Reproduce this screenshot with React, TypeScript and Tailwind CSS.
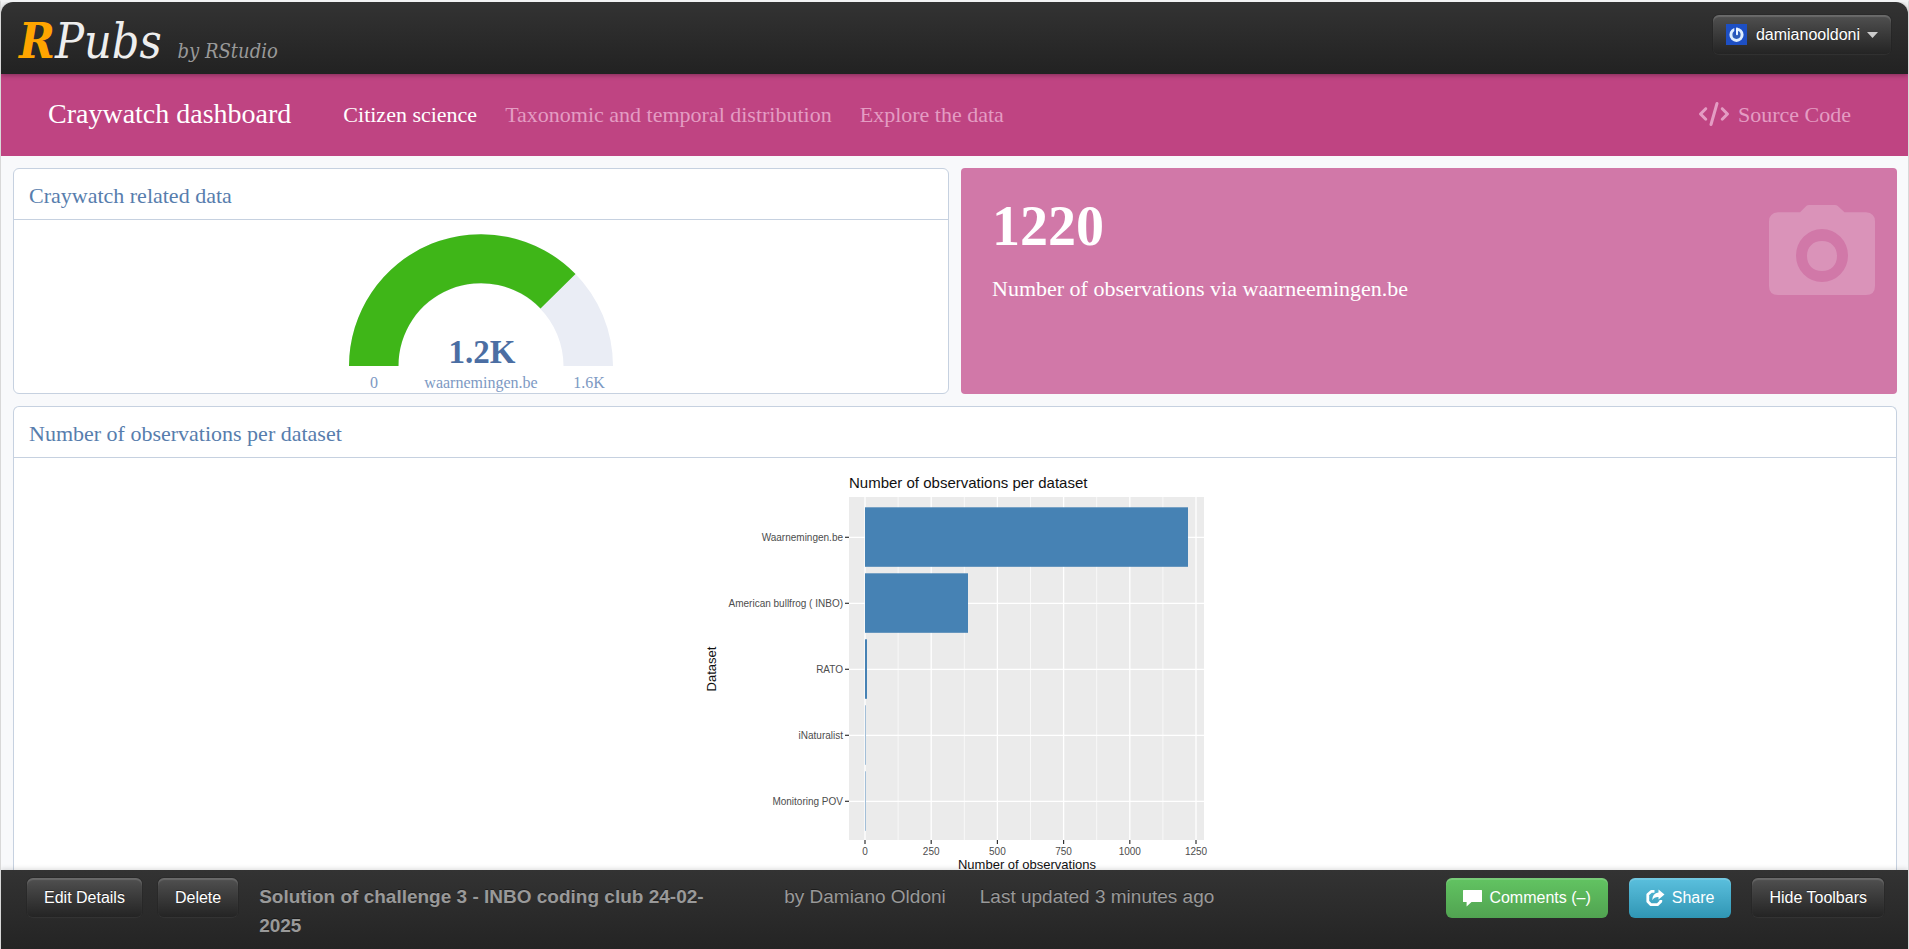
import type { ReactNode } from "react";
import { FaCode } from "react-icons/fa6";

const datasets = [
  { name: "Waarnemingen.be", width: 323 },
  { name: "American bullfrog ( INBO)", width: 103 },
  { name: "RATO", width: 2 },
  { name: "iNaturalist", width: 1 },
  { name: "Monitoring POV", width: 1 },
];

const ticks = [0, 250, 500, 750, 1000, 1250];

const SANS = "font-['Liberation_Sans',Arial,sans-serif]";

function DarkButton({ children }: { children: ReactNode }) {
  return (
    <button
      type="button"
      className="flex h-[39px] shrink-0 items-center whitespace-nowrap rounded-md bg-linear-to-b from-[#515151] to-[#242424] px-[17px] text-[16px] leading-none text-white shadow-[inset_0_2px_1px_rgba(255,255,255,0.15),0_1px_1px_rgba(255,255,255,0.08),0_0_0_1px_rgba(0,0,0,0.12)] [text-shadow:0_-1px_0_rgba(0,0,0,0.4)]"
    >
      {children}
    </button>
  );
}

function Avatar() {
  return (
    <svg width="21" height="21" viewBox="0 0 21 21" aria-hidden="true">
      <rect width="21" height="21" fill="#1d4fc4" />
      <circle cx="10.5" cy="10.8" r="5.6" fill="#2c5bb8" stroke="#dcecff" strokeWidth="3" />
      <path d="M8.3 3h2v8h-2z" fill="#1d4fc4" />
      <path d="M11 4.5v5.700" stroke="#eaf5ff" strokeWidth="2" strokeLinecap="round" />
    </svg>
  );
}

function CameraIcon() {
  return (
    <svg width="106" height="90" viewBox="0 0 106 90" aria-hidden="true" className="text-white/20">
      <path
        fill="currentColor"
        fillRule="evenodd"
        d="M9 7.3H31L37.5.8Q38.400 0 40 0H66Q67.600 0 68.500.8L75.500 7.300H97Q106 8 106 16.500V81Q106 90 97 90H9Q0 90 0 81V16.500Q0 8 9 7.300ZM53 24A26 26.500 0 1 0 53 77A26 26.500 0 1 0 53 24ZM53 36C62 36 68 42 68 51C68 60 62 66 53 66C44 66 38 60 38 51C38 42 44 36 53 36Z"
      />
    </svg>
  );
}

function CommentIcon() {
  return (
    <svg width="19" height="17" viewBox="0 0 19 17" fill="#fff" aria-hidden="true">
      <path d="M.5 0H18.500Q19 0 19 .5V11.500Q19 12 18.500 12H8.500L3.600 16.500V12H.5Q0 12 0 11.500V.5Q0 0 .5 0Z" />
    </svg>
  );
}

function ShareIcon() {
  return (
    <svg width="19" height="18" viewBox="0 0 19 18" fill="none" aria-hidden="true">
      <path
        d="M8.500 2.300H5.500L1.800 5.500V12.500L5 15.700H11.500L14.800 12.500V11"
        stroke="#fff"
        strokeWidth="2.800"
        strokeLinejoin="round"
      />
      <path d="M12.500 .5L18.500 5.600L12.500 10.500V7.900Q8.500 7.600 6.200 11.200Q6.400 4.200 12.500 3.500Z" fill="#fff" />
    </svg>
  );
}

function Gauge() {
  return (
    <svg
      width="264"
      height="173"
      viewBox="0 0 264 173"
      role="img"
      aria-label="1.2K of 1.6K, waarnemingen.be"
      className="font-['Liberation_Serif','Times_New_Roman',serif]"
    >
      <path d="M0 146A132 132 0 0 1 264 146H214.500A82.500 82.500 0 0 0 49.500 146Z" fill="#eaedf5" />
      <path
        d="M0 146A132 132 0 0 1 226.500 54L191.500 88.500A82.500 82.500 0 0 0 49.500 146Z"
        fill="#3fb618"
      />
      <text x="133" y="143" textAnchor="middle" fontSize="33" fontWeight="700" fill="#4b6ea3">
        1.2K
      </text>
      <g fontSize="16" fill="#7d99c3" textAnchor="middle">
        <text x="25" y="168">0</text>
        <text x="132" y="168">waarnemingen.be</text>
        <text x="240" y="168">1.6K</text>
      </g>
    </svg>
  );
}

function BarChart() {
  return (
    <svg
      width="513"
      height="430"
      viewBox="0 0 513 430"
      role="img"
      aria-label="Number of observations per dataset"
      className={"shrink-0 " + SANS}
    >
      <text x="150" y="30" fontSize="15" fill="#111">
        Number of observations per dataset
      </text>
      <rect x="150" y="39" width="355" height="343" fill="#ebebeb" />
      {ticks.slice(0, 5).map((t) => (
        <path key={t} d={`M${199.1 + t * 0.2648} 39V382`} stroke="#fff" strokeWidth="0.7" />
      ))}
      {ticks.map((t) => (
        <g key={t}>
          <path d={`M${166 + t * 0.2648} 39V382`} stroke="#fff" strokeWidth="1.3" />
          <path d={`M${166 + t * 0.2648} 382V386`} stroke="#333" strokeWidth="1.2" />
          <text x={166 + t * 0.2648} y="397" fontSize="10" textAnchor="middle" fill="#4d4d4d">
            {t}
          </text>
        </g>
      ))}
      {datasets.map((d, i) => (
        <g key={d.name}>
          <path d={`M150 ${79.3 + i * 66}H505`} stroke="#fff" strokeWidth="1.300" />
          <path d={`M146 ${79.3 + i * 66}H150`} stroke="#333" strokeWidth="1.200" />
          <rect
            x="166"
            y={49.3 + i * 66}
            width={d.width}
            height="59.500"
            fill={d.width === 1 ? "#a3bfd8" : "#4682b4"}
          />
          <text x="144" y={83 + i * 66} fontSize="10" textAnchor="end" fill="#4d4d4d">
            {d.name}
          </text>
        </g>
      ))}
      <text x="328" y="411" fontSize="13" textAnchor="middle" fill="#111">
        Number of observations
      </text>
      <text transform="translate(17 211) rotate(-90)" fontSize="13" textAnchor="middle" fill="#111">
        Dataset
      </text>
    </svg>
  );
}

function CardTitle({ children }: { children: ReactNode }) {
  return (
    <h2 className="flex h-[51px] shrink-0 items-center border-b border-[#c6d1e0] px-[15px] pt-1 text-[22px] leading-[30px] text-[#577dad]">
      {children}
    </h2>
  );
}

export default function App() {
  return (
    <div className="flex h-screen flex-col overflow-hidden border-x border-t-2 border-x-[#d8d8d8] border-t-[#f2f3f4] bg-[#f2f3f4] font-['Liberation_Serif','Times_New_Roman',serif]">
      <header
        className={
          "relative z-10 flex h-[72px] shrink-0 items-start justify-between rounded-t-xl bg-linear-to-b from-[#333] to-[#222] pl-[18px] pr-[17px] shadow-[0_1px_5px_rgba(0,0,0,0.35)] " +
          SANS
        }
      >
        <a
          href="#"
          className="flex items-baseline gap-4 pt-[9px] font-['DejaVu_Serif_Condensed','DejaVu_Serif',serif] italic"
        >
          <span className="text-[48px] leading-[60px] text-[#eee]">
            <b className="text-[#ffa500]">R</b>Pubs
          </span>
          <span className="text-[20px] text-[#999]">by RStudio</span>
        </a>
        <div className="pt-[13px]">
          <DarkButton>
            <span className="-ml-1 flex items-center">
              <Avatar />
              <span className="ml-[9px]">damianooldoni</span>
              <svg width="11" height="6" viewBox="0 0 11 6" className="-mr-1 ml-[7px]" aria-hidden="true">
                <path d="M0 0H11L5.500 6Z" fill="#ccc" />
              </svg>
            </span>
          </DarkButton>
        </div>
      </header>

      <nav className="flex h-[82px] shrink-0 items-center bg-[#bf4482] pb-[2px] pl-[47px] pr-[57px] text-[22px] text-[#e49cc3]">
        <a href="#" className="mr-[52px] text-[28px] text-white">
          Craywatch dashboard
        </a>
        <div className="flex gap-[28px]">
          <a href="#" className="text-white">
            Citizen science
          </a>
          <a href="#">Taxonomic and temporal distribution</a>
          <a href="#">Explore the data</a>
        </div>
        <a href="#" className="ml-auto flex items-center gap-[9px]">
          <FaCode size={24} className="w-[30px]" aria-hidden="true" />
          Source Code
        </a>
      </nav>

      <main className="flex min-h-0 flex-1 flex-col gap-3 overflow-hidden bg-[#f8f9fb] pl-3 pr-[11px] pt-3">
        <div className="grid shrink-0 grid-cols-2 gap-3">
          <section className="flex flex-col overflow-hidden rounded-md border border-[#c6d1e0] bg-white">
            <CardTitle>Craywatch related data</CardTitle>
            <div className="flex justify-center">
              <Gauge />
            </div>
          </section>
          <section className="flex items-start justify-between rounded-sm bg-[#d178a8] pl-[31px] pr-[22px] text-white">
            <div className="pt-[26px]">
              <p className="text-[56px] font-bold leading-[64px]">1220</p>
              <p className="pt-[14px] text-[22px] leading-[34px]">
                Number of observations via waarneemingen.be
              </p>
            </div>
            <div className="pt-[37px]">
              <CameraIcon />
            </div>
          </section>
        </div>
        <section className="flex min-h-0 flex-1 flex-col overflow-hidden rounded-t-md border border-b-0 border-[#c6d1e0] bg-white">
          <CardTitle>Number of observations per dataset</CardTitle>
          <div className="flex justify-center">
            <BarChart />
          </div>
        </section>
      </main>

      <footer
        className={
          "relative z-10 flex shrink-0 items-start bg-linear-to-b from-[#333] to-[#242424] pb-[9px] pl-[26px] pr-6 pt-2 text-[19px] leading-[29px] text-[#999] shadow-[0_-1px_5px_rgba(0,0,0,0.15)] [text-shadow:0_-1px_0_rgba(0,0,0,0.4)] " +
          SANS
        }
      >
        <div className="flex shrink-0 gap-4">
          <DarkButton>Edit Details</DarkButton>
          <DarkButton>Delete</DarkButton>
        </div>
        <div className="ml-[21px] flex pt-1">
          <strong className="w-[470px]">Solution of challenge 3 - INBO coding club 24-02-2025</strong>
          <span className="ml-[55px]">by Damiano Oldoni</span>
          <span className="ml-[34px]">Last updated 3 minutes ago</span>
        </div>
        <div className="ml-auto flex gap-[21px]">
          <button
            type="button"
            className="flex h-10 items-center gap-[7px] rounded-md bg-linear-to-b from-[#62c462] to-[#51a351] px-[17px] text-[16px] leading-none text-white shadow-[inset_0_2px_0_rgba(255,255,255,0.15)]"
          >
            <CommentIcon />
            Comments (–)
          </button>
          <button
            type="button"
            className="flex h-10 items-center gap-[7px] rounded-md bg-linear-to-b from-[#5bc0de] to-[#2f96b4] px-[17px] text-[16px] leading-none text-white shadow-[inset_0_2px_0_rgba(255,255,255,0.15)]"
          >
            <ShareIcon />
            Share
          </button>
          <DarkButton>Hide Toolbars</DarkButton>
        </div>
      </footer>
    </div>
  );
}
